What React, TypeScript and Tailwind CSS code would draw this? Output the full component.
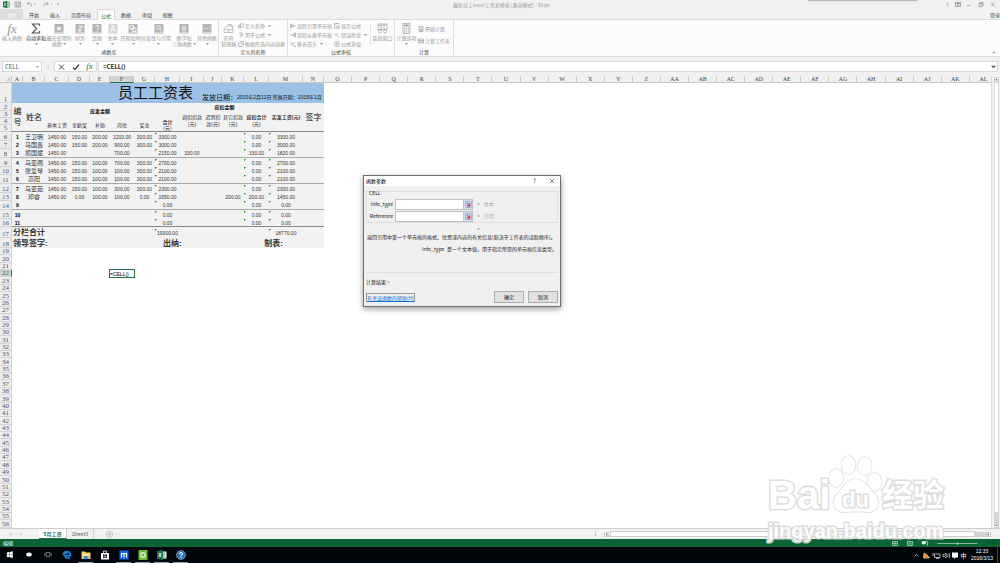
import type { ReactNode } from "react";

/* ---------- data ---------- */

type PayRow = { n: number; name: string; c: string[]; h: string; i?: string; k?: string; l: string; m: string };

const pay: PayRow[] = [
  { n: 1, name: "王卫明", c: ["1450.00", "150.00", "200.00", "1200.00", "300.00"], h: "3300.00", l: "0.00", m: "3300.00" },
  { n: 2, name: "马国鑫", c: ["1450.00", "150.00", "200.00", "900.00", "300.00"], h: "3000.00", l: "0.00", m: "3000.00" },
  { n: 3, name: "熊国斌", c: ["1450.00", "", "", "700.00", ""], h: "2150.00", i: "330.00", l: "330.00", m: "1820.00" },
  { n: 4, name: "马亚阁", c: ["1450.00", "150.00", "100.00", "700.00", "300.00"], h: "2700.00", l: "0.00", m: "2700.00" },
  { n: 5, name: "张爱琴", c: ["1450.00", "150.00", "100.00", "100.00", "300.00"], h: "2100.00", l: "0.00", m: "2100.00" },
  { n: 6, name: "高阳", c: ["1450.00", "150.00", "100.00", "100.00", "300.00"], h: "2100.00", l: "0.00", m: "2100.00" },
  { n: 7, name: "马亚茹", c: ["1450.00", "150.00", "100.00", "300.00", "300.00"], h: "2300.00", l: "0.00", m: "2300.00" },
  { n: 8, name: "邓睿", c: ["1450.00", "0.00", "100.00", "100.00", "0.00"], h: "1650.00", k: "200.00", l: "200.00", m: "1450.00" },
  { n: 9, name: "", c: ["", "", "", "", ""], h: "0.00", l: "0.00", m: "0.00" },
  { n: 10, name: "", c: ["", "", "", "", ""], h: "0.00", l: "0.00", m: "0.00" },
  { n: 11, name: "", c: ["", "", "", "", ""], h: "0.00", l: "0.00", m: "0.00" },
];

const columns = [
  ..."ABCDEFGHIJKLMNOPQRSTUVWXYZ".split(""),
  ..."ABCDEFGHIJKL".split("").map((l) => "A" + l),
];
const colWidths = [
  "w-[12px]", "w-[11px]", "w-[22px]", "w-[24px]", "w-[21px]", "w-[20px]", "w-[24px]", "w-[21px]",
  "w-[25px]", "w-[24px]", "w-[18px]", "w-[22px]", "w-[25px]", "w-[34px]", "w-[21px]",
];
const emptyRows = Array.from({ length: 38 }, (_, i) => i + 19);

/* ---------- ribbon ---------- */

function Book({ children }: { children: ReactNode }) {
  return (
    <svg viewBox="0 0 20 22" className="h-[11px] w-[10px]">
      <path d="M1 2h18v19H1z" fill="#b7b2b7" />
      <path d="M3 19h16" stroke="#e6e4e6" strokeWidth="1.4" />
      <g fill="none" stroke="#f7f5f7" strokeWidth="2">{children}</g>
    </svg>
  );
}

const Caret = () => (
  <svg viewBox="0 0 6 4" className="h-[2px] w-[3px]">
    <path d="M0 0h6L3 4z" fill="#9a9a9a" />
  </svg>
);

function Big({ w, lines, icon, dark, caret = true }: { w: string; lines: string[]; icon: ReactNode; dark?: boolean; caret?: boolean }) {
  return (
    <button className={`${w} flex shrink-0 flex-col items-center pt-[2px] text-[5px] leading-[6px] whitespace-nowrap ${dark ? "text-[#333]" : "text-[#999]"}`}>
      <span className="flex h-[13px] items-center">{icon}</span>
      {lines.map((l, i) => (
        <span key={l} className="flex items-center gap-[1px]">
          {l}
          {caret && i === 1 && <Caret />}
        </span>
      ))}
      {caret && lines.length === 1 && <span className="flex h-[5px] items-center"><Caret /></span>}
    </button>
  );
}

function Small({ icon, children, caret }: { icon: ReactNode; children: ReactNode; caret?: boolean }) {
  return (
    <button className="flex h-[9px] items-center gap-[1px] text-[5px] leading-[7px] whitespace-nowrap text-[#999]">
      <svg viewBox="0 0 12 12" className="h-[6px] w-[6px]" fill="none" stroke="#aaa5aa" strokeWidth="1.5">{icon}</svg>
      {children}
      {caret && <span className="pl-[2px]"><Caret /></span>}
    </button>
  );
}

function Group({ title, w, children }: { title: string; w: string; children: ReactNode }) {
  return (
    <section className={`${w} flex shrink-0 flex-col border-r border-[#dedede]`}>
      <div className="flex h-[28px]">{children}</div>
      <h2 className="text-center text-[5px] leading-[8px] text-[#444]">{title}</h2>
    </section>
  );
}

function Ribbon() {
  return (
    <div className="flex h-[38px] shrink-0 border-y border-[#dcdcdc] bg-[#fcfcfc]">
      <Group title="函数库" w="w-[219px]">
        <Big w="w-[24px]" lines={["插入函数"]} caret={false} icon={<i className="font-['Liberation_Serif',serif] text-[13px] leading-none text-[#999]">fx</i>} />
        <Big w="w-[24px]" dark lines={["自动求和"]} icon={
          <svg viewBox="0 0 20 22" className="h-[11px] w-[10px]"><path d="M17 6V2H3l8 9-8 9h14v-4" fill="none" stroke="#555" strokeWidth="2.4" /></svg>
        } />
        <Big w="w-[22px]" lines={["最近使用的", "函数"]} icon={<Book><path d="M10 5l1.500 4h4.500l-3.500 3 1.500 4-4-2.500L6 16l1.500-4L4 9h4.500z" fill="#f7f5f7" stroke="none" /></Book>} />
        <Big w="w-[20px]" lines={["财务"]} icon={<Book><path d="M6 13h7M6 16h7M8 9h8M8 6h8" /></Book>} />
        <Big w="w-[14px]" lines={["逻辑"]} icon={<Book><path d="M7 8q0-3 3.500-3T14 8q0 2-3.500 4v2M10.500 15.500v2" /></Book>} />
        <Big w="w-[17px]" lines={["文本"]} icon={
          <svg viewBox="0 0 20 22" className="h-[11px] w-[10px]"><path d="M1 2h18v19H1z" fill="#d9d2d9" /><path d="M5 17l5-12 5 12M7 13h6" fill="none" stroke="#fff" strokeWidth="2" /></svg>
        } />
        <Big w="w-[24px]" lines={["日期和时间"]} icon={<Book><path d="M4 5h7v7H4zM9 10h7v7H9z" /></Book>} />
        <Big w="w-[27px]" lines={["查找与引用"]} icon={<Book><circle cx="9" cy="9" r="3.500" /><path d="M12 12l4 5" /></Book>} />
        <Big w="w-[24px]" lines={["数学和", "三角函数"]} icon={<Book><ellipse cx="10" cy="11" rx="3.500" ry="5.500" /><path d="M7 11h6" /></Book>} />
        <Big w="w-[22px]" lines={["其他函数"]} icon={<Book><path d="M4 11h2.500M9 11h2.500M14 11h2.500" /></Book>} />
      </Group>
      <Group title="定义的名称" w="w-[69px]">
        <Big w="w-[19px]" lines={["名称", "管理器"]} caret={false} icon={
          <svg viewBox="0 0 22 20" className="h-[10px] w-[11px]" fill="none" stroke="#b5b0b5" strokeWidth="1.6"><path d="M2 11L7 4h11l2 7v6H2zM2 11h18M8 14h6M9 1h8l3 5" /></svg>
        } />
        <div className="flex flex-col pt-px">
          <Small caret icon={<path d="M4 2h8v6H4zM1 5h4v5H1z" />}>定义名称</Small>
          <Small caret icon={<path d="M2 2h6v4M4 10l3-6 3 6" />}>用于公式</Small>
          <Small icon={<path d="M1 4h7v7H1zM4 1h7v7" />}>根据所选内容创建</Small>
        </div>
      </Group>
      <Group title="公式审核" w="w-[107px]">
        <div className="flex w-[46px] flex-col pt-px pl-[2px]">
          <Small icon={<path d="M1 1v10M3 3l6 3-6 3zM9 6h3" />}>追踪引用单元格</Small>
          <Small icon={<path d="M11 1v10M1 6h3M9 3L4 6l5 3z" />}>追踪从属单元格</Small>
          <Small caret icon={<path d="M1 2l8 9M9 2L1 10M8 11h4" />}>移去箭头</Small>
        </div>
        <div className="flex w-[36px] flex-col pt-px">
          <Small icon={<path d="M1 1h9v9H1zM3 3l7 8" />}>显示公式</Small>
          <Small caret icon={<path d="M1 3l3 4 4-5M7 7l4 4" />}>错误检查</Small>
          <Small icon={<><circle cx="6" cy="6" r="5" /><path d="M4 9l2-6 2 6" /></>}>公式求值</Small>
        </div>
        <div className="mt-[4px] h-[21px] border-l border-[#e4e4e4]" />
        <Big w="w-[23px]" lines={["监视窗口"]} caret={false} icon={
          <svg viewBox="0 0 22 22" className="h-[11px] w-[11px]" fill="none" stroke="#aaa4aa" strokeWidth="1.6"><path d="M2 2h18v11H2z" /><path d="M2 4h18M8 4v9M14 4v9" /><circle cx="6" cy="17" r="3" fill="#fff" /><circle cx="16" cy="17" r="3" fill="#fff" /></svg>
        } />
      </Group>
      <Group title="计算" w="w-[59px]">
        <Big w="w-[23px]" lines={["计算选项"]} icon={
          <svg viewBox="0 0 18 22" className="h-[11px] w-[9px]" fill="none" stroke="#b0abb0" strokeWidth="1.6"><path d="M2 1h14v20H2z" /><path d="M4 5h10" strokeWidth="4" /><path d="M5 10v9M9 10v9M13 10v9" strokeWidth="2.500" strokeDasharray="2 1.500" /></svg>
        } />
        <div className="flex flex-col gap-[3px] pt-[4px]">
          <Small icon={<path d="M2 1h8v10H2zM3 4h6M4 7h5M4 9h5" />}>开始计算</Small>
          <Small icon={<path d="M1 2h10v8H1zM1 5h10M4 2v8M8 6v4" />}>计算工作表</Small>
        </div>
      </Group>
      <div className="flex flex-1 items-end justify-end pr-[4px] pb-[2px]">
        <svg viewBox="0 0 8 5" className="h-[3px] w-[4px]" fill="none" stroke="#555" strokeWidth="1.5"><path d="M1 4l3-3 3 3" /></svg>
      </div>
    </div>
  );
}

function ExcelMark({ className }: { className: string }) {
  return (
    <svg viewBox="0 0 20 20" className={className}>
      <path d="M9 3h10v14H9z" fill="#fff" stroke="#217346" strokeWidth="1.5" />
      <path d="M12 6h5M12 10h5M12 14h5" stroke="#217346" strokeWidth="1.6" />
      <path d="M0 2l12-2v20L0 18z" fill="#1e7145" />
      <path d="M3.500 6l5 8M8.500 6l-5 8" stroke="#fff" strokeWidth="1.8" />
    </svg>
  );
}

function TitleBar() {
  return (
    <header className="relative flex h-[9px] shrink-0 items-center justify-between">
      <div className="absolute top-0 right-[82px] h-px w-[110px] rounded-b bg-[#b8b8b8] shadow" />
      <div className="flex items-center pl-[3px] text-[#999]">
        <ExcelMark className="h-[7px] w-[7px]" />
        <svg viewBox="0 0 90 14" className="ml-[4px] h-[7px] w-[45px]" fill="none" stroke="#a0a0a0" strokeWidth="1.6">
          <path d="M2 2h11v10H2zM4 2v4h7V2M5 12V9h5v3" />
          <path d="M30 2l-4 3 4 3M26 5h6q4 1 3 6" />
          <path d="M65 2l4 3-4 3M69 5h-6q-4 1-3 6" />
          <path d="M40 6h3M74 6h3M86 4h4M86 7h4" strokeWidth="1.500" />
        </svg>
      </div>
      <h1 className="text-[5px] leading-[9px] text-[#a0a0a0]">最新员工excel工资表模板 (兼容模式) - Excel</h1>
      <div className="flex w-[56px] items-center gap-[7px] pl-[2px] text-[5px] text-[#888]">
        <span>?</span>
        <svg viewBox="0 0 84 10" className="h-[5px] w-[42px]" fill="none" stroke="#8a8a8a" strokeWidth="1.4">
          <path d="M1 1h10v8H1zM1 3h10M6 4v5M4 6h4M24 7h7M48 3h6v6h-6zM50 3V1h6v6h-2M72 1l7 8M79 1l-7 8" />
        </svg>
      </div>
    </header>
  );
}

const tabs: [string, string][] = [
  ["文件", "w-[23px] bg-[#dcdcdc] text-white"],
  ["开始", "w-[22px] text-[#444]"],
  ["插入", "w-[20px] text-[#444]"],
  ["页面布局", "w-[32px] text-[#444]"],
  ["公式", "w-[18px] border border-b-0 border-[#d8d8d8] bg-[#fcfcfc] text-[#217346]"],
  ["数据", "w-[22px] text-[#444]"],
  ["审阅", "w-[20px] text-[#444]"],
  ["视图", "w-[21px] text-[#444]"],
];

function FormulaBar() {
  return (
    <div className="flex h-[19px] shrink-0 items-center px-[2px]">
      <div className="flex h-[11px] w-[40px] items-center border border-[#d9d9d9] bg-white">
        <input aria-label="名称框" defaultValue="CELL" className="h-[9px] w-[33px] bg-transparent pl-[2px] text-[6px] text-[#555] outline-none" />
        <Caret />
      </div>
      <span className="w-[12px] text-center text-[6px] leading-[8px] text-[#888]">⁝</span>
      <div className="flex h-[11px] w-[43px] items-center justify-around border border-[#d9d9d9] bg-white">
        <button aria-label="取消输入"><svg viewBox="0 0 12 12" className="h-[6px] w-[7px]" fill="none" stroke="#444" strokeWidth="2"><path d="M1 1l10 10M11 1L1 11" /></svg></button>
        <button aria-label="输入"><svg viewBox="0 0 14 12" className="h-[6px] w-[8px]" fill="none" stroke="#444" strokeWidth="2.600"><path d="M1 7l4 4 8-10" /></svg></button>
        <button aria-label="插入函数" className="font-['Liberation_Serif',serif] text-[9px] leading-[9px] text-[#217346] italic">fx</button>
      </div>
      <div className="ml-[1px] flex h-[11px] flex-1 items-center border border-[#d9d9d9] bg-white pr-[1px]">
        <input aria-label="编辑栏" defaultValue="=CELL()" className="h-[9px] flex-1 bg-transparent pl-[4px] text-[6px] font-bold text-[#222] outline-none" />
        <svg viewBox="0 0 8 5" className="h-[3px] w-[5px]" fill="none" stroke="#444" strokeWidth="1.800"><path d="M1 1l3 3 3-3" /></svg>
      </div>
    </div>
  );
}

/* ---------- worksheet ---------- */

function RowHead({ n }: { n: number }) {
  const active = n === 22;
  return (
    <th scope="row" className={`border-r border-b border-[#d2d2d2] p-0 text-center align-bottom font-['Liberation_Serif',serif] text-[7px] leading-[6px] font-normal ${active ? "border-r-[#217346] bg-[#d2d2d2] text-[#217346]" : "bg-[#ededed] text-[#555]"}`}>
      {n}
    </th>
  );
}

function Flag({ children }: { children: ReactNode }) {
  return (
    <div className="relative">
      <svg viewBox="0 0 4 4" className="absolute -top-[1px] left-0 h-[2px] w-[2px]"><path d="M0 0h4L0 4z" fill="#168a2c" /></svg>
      {children}
    </div>
  );
}

function Sheet() {
  return (
    <table className="h-full w-[calc(100%+7px)] table-fixed border-separate border-spacing-0 text-center font-['Liberation_Sans','Noto_Sans_CJK_SC',sans-serif] text-[5px] leading-[6px] text-[#333]">
      <colgroup>
        {colWidths.map((w, i) => <col key={i} className={w} />)}
        {columns.slice(14).map((c) => <col key={c} />)}
      </colgroup>
      <thead>
        <tr className="h-[7px] font-['Liberation_Serif',serif] text-[6px] leading-[6px]">
          <td className="border-r border-b border-[#c8c8c8] bg-[#f0f0f0] p-0">
            <svg viewBox="0 0 10 6" className="ml-auto h-[4px] w-[6px]"><path d="M8 0v6H2z" fill="#c0c0c0" /></svg>
          </td>
          {columns.map((c) => (
            <th key={c} scope="col" className={`border-r border-b p-0 font-normal ${c === "F" ? "border-r-[#c8c8c8] border-b-[#217346] bg-[#d2d2d2] text-[#217346]" : "border-[#c8c8c8] bg-[#f0f0f0] text-[#444]"}`}>{c}</th>
          ))}
        </tr>
      </thead>
      <tbody className="[&_td]:p-0 [&_td]:whitespace-nowrap">
        <tr className="h-[20px]">
          <RowHead n={1} />
          <td colSpan={14} className="bg-[#9bc2e6] text-[#111]">
            <div className="flex items-end pl-[106px]">
              <span className="text-[15px] leading-[18px]">员工工资表</span>
              <span className="pl-[9px] text-[7px] leading-[9px]">发放日期：</span>
              <span className="text-[5px] leading-[9px]">2015年2月12日 所属日期：2015年1月</span>
            </div>
          </td>
          <td colSpan={24} />
        </tr>
        <tr className="h-[8px] [&>td:not(:last-child)]:bg-[#f2f2f2]">
          <RowHead n={2} />
          <td rowSpan={4} className="border-b border-[#888] text-[8px] leading-[11px] whitespace-normal! text-[#111]">编<br />号</td>
          <td rowSpan={4} className="border-b border-[#888] text-[8px] leading-[9px] text-[#111]">姓名</td>
          <td rowSpan={2} colSpan={5} className="font-bold text-[#111]">应发金额</td>
          <td rowSpan={2} />
          <td colSpan={4} className="font-bold text-[#111]">应扣金额</td>
          <td />
          <td rowSpan={4} className="border-b border-[#888] text-[8px] leading-[9px] text-[#111]">签字</td>
          <td colSpan={24} />
        </tr>
        <tr className="h-[7px] [&>td:not(:last-child)]:bg-[#f2f2f2]">
          <RowHead n={3} />
          <td rowSpan={3} className="border-b border-[#888] leading-[7px]">调扣扣款<br />(元)</td>
          <td rowSpan={3} className="border-b border-[#888] leading-[7px]">迟到扣<br />款(元)</td>
          <td rowSpan={3} className="border-b border-[#888] leading-[7px]">其它扣款<br />(元)</td>
          <td rowSpan={3} className="border-b border-[#888] leading-[7px]"><b>应扣合计</b><br />(元)</td>
          <td rowSpan={3} className="border-b border-[#888] pb-[7px]! leading-[7px] font-bold">实发工资(元)</td>
          <td colSpan={24} />
        </tr>
        <tr className="h-[7px] [&>td:not(:last-child)]:bg-[#f2f2f2]">
          <RowHead n={4} />
          {["基本工资", "全勤奖", "补助", "岗位", "奖金"].map((t) => (
            <td key={t} rowSpan={2} className="border-b border-[#888]">{t}</td>
          ))}
          <td rowSpan={2} className="border-b border-[#888] leading-[6px]"><b>合计</b><br />（元）</td>
          <td colSpan={24} />
        </tr>
        <tr className="h-[7px]">
          <RowHead n={5} />
          <td colSpan={24} />
        </tr>
        {pay.map((r) => (
          <tr
            key={r.n}
            className={`${r.n % 3 === 2 ? "h-[8px]" : "h-[9px]"} [&>td:not(:last-child)]:bg-[#f2f2f2] ${r.n === 11 ? "[&>td:not(:last-child)]:border-b [&>td:not(:last-child)]:border-[#888]" : r.n % 3 === 0 ? "[&>td:not(:last-child)]:border-b [&>td:not(:last-child)]:border-[#aaa]" : ""}`}
          >
            <RowHead n={r.n + 5} />
            <td className="font-bold text-black">{r.n}</td>
            <td className="text-[6px]">{r.name}</td>
            {r.c.map((v, i) => <td key={i}>{v}</td>)}
            <td><Flag>{r.h}</Flag></td>
            <td>{r.i}</td>
            <td />
            <td>{r.k}</td>
            <td><Flag>{r.l}</Flag></td>
            <td><Flag>{r.m}</Flag></td>
            <td />
            <td colSpan={24} />
          </tr>
        ))}
        <tr className="h-[11px] [&>td:not(:last-child)]:bg-[#f2f2f2]">
          <RowHead n={17} />
          <td colSpan={7} className="pl-px! text-left text-[8px] leading-[9px] font-medium text-[#111]">分栏合计</td>
          <td><Flag>19300.00</Flag></td>
          <td colSpan={4} />
          <td><Flag>18770.00</Flag></td>
          <td />
          <td colSpan={24} />
        </tr>
        <tr className="h-[10px] text-[8px] leading-[9px] font-bold text-[#333] [&>td:not(:last-child)]:bg-[#f2f2f2]">
          <RowHead n={18} />
          <td colSpan={7} className="pl-px! text-left">领导签字:</td>
          <td colSpan={4} className="pl-[8px]! text-left">出纳:</td>
          <td colSpan={2}>制表:</td>
          <td />
          <td colSpan={24} />
        </tr>
        {emptyRows.map((n) =>
          n === 22 ? (
            <tr key={n}>
              <RowHead n={n} />
              <td colSpan={5} />
              <td className="text-left text-black outline outline-[#217346]">=CELL()</td>
              <td colSpan={32} />
            </tr>
          ) : (
            <tr key={n}>
              <RowHead n={n} />
              <td colSpan={38} />
            </tr>
          ),
        )}
      </tbody>
    </table>
  );
}

function Arrow({ d }: { d: string }) {
  return (
    <span className="flex h-[5px] w-[5px] shrink-0 items-center justify-center border border-[#d0d0d0] bg-white">
      <svg viewBox="0 0 4 4" className="h-[3px] w-[3px]"><path d={d} fill="#555" /></svg>
    </span>
  );
}

/* ---------- dialog ---------- */

function ArgRow({ id, label, hint }: { id: string; label: string; hint: string }) {
  return (
    <div className="flex h-[12px] items-center">
      <label htmlFor={id} className="w-[25px] text-right">{label}</label>
      <div className="ml-[2px] flex h-[11px] w-[78px] border border-[#c0c0c0] bg-white">
        <input id={id} className="min-w-0 flex-1 px-[1px] text-[5px] outline-none" />
        <button type="button" aria-label={`选择 ${label}`} className="flex w-[9px] items-center justify-center border-l border-[#c0c0c0] bg-[#d8def0]">
          <svg viewBox="0 0 12 12" className="h-[7px] w-[7px]"><path d="M1 1h10v10H1zM1 4h10M4 1v10M7 1v10M1 7h10" fill="#fff" stroke="#6d86c6" /><path d="M4 4l4 4M8.500 5v4h-4z" fill="#d23" stroke="#d23" /></svg>
        </button>
      </div>
      <span className="pl-[4px]">=</span>
      <span className="pl-[4px] text-[#a8a8a8]">{hint}</span>
    </div>
  );
}

function ArgsDialog() {
  return (
    <form role="dialog" aria-label="函数参数" className="absolute top-[175px] left-[363px] flex w-[198px] flex-col border border-[#6e6e6e] bg-[#f0f0f0] text-[5px] leading-[8px] text-[#222] shadow-[0_2px_6px_rgba(0,0,0,0.4)]">
      <div className="flex h-[10px] items-center bg-white pl-[2px]">
        <h2 className="flex-1 text-black">函数参数</h2>
        <button type="button" aria-label="帮助" className="w-[17px] text-[6px]">?</button>
        <button type="button" aria-label="关闭" className="flex w-[17px] justify-center">
          <svg viewBox="0 0 8 8" className="h-[4px] w-[4px]" stroke="#333" strokeWidth="1.200"><path d="M0 0l8 8M8 0L0 8" /></svg>
        </button>
      </div>
      <fieldset className="mx-[2px] mt-[5px] h-[32px] border border-[#dedede] pl-px">
        <div className="h-[6px] pl-px leading-[2px]">CELL</div>
        <ArgRow id="info-type" label="Info_type" hint="文本" />
        <ArgRow id="reference" label="Reference" hint="引用" />
      </fieldset>
      <p className="pt-[2px] pl-[113px]">=</p>
      <p className="pl-[3px] whitespace-nowrap">返回引用中第一个单元格的格式、位置或内容的有关信息(取决于工作表的读取顺序)。</p>
      <p className="flex gap-[3px] pt-[4px] pl-[58px] whitespace-nowrap">
        <span className="w-[22px]">Info_type</span>
        <span>是一个文本值，用于指定所需的单元格信息类型。</span>
      </p>
      <div className="mx-[2px] mt-[19px] border-t border-[#dedede] pt-[5px]">计算结果 =</div>
      <div className="flex items-center gap-[4px] pt-[5px] pr-[2px] pb-[3px] pl-[2px]">
        <a href="#help" className="border border-[#999] leading-[7px] text-[#0a6fd0] underline">有关该函数的帮助(H)</a>
        <button type="submit" className="ml-auto h-[12px] w-[30px] border border-[#adadad] bg-[#e1e1e1]">确定</button>
        <button type="button" className="h-[12px] w-[30px] border border-[#adadad] bg-[#e1e1e1]">取消</button>
      </div>
    </form>
  );
}

/* ---------- watermark ---------- */

function Watermark() {
  return (
    <div className="pointer-events-none absolute right-[54px] bottom-[18px] flex w-[178px] flex-col font-['Liberation_Sans','Noto_Sans_CJK_SC',sans-serif] font-bold text-white opacity-90 [-webkit-text-stroke:3px_#dadada] [paint-order:stroke_fill]">
      <div className="flex h-[58px] items-end">
        <span className="w-[61px] text-[40px] leading-[36px]">Bai</span>
        <span className="relative h-[58px] w-[53px]">
          <svg viewBox="0 0 53 58" className="h-[58px] w-[53px]" fill="#fff" stroke="#dadada" strokeWidth="1.500">
            <ellipse cx="7" cy="23" rx="7" ry="9" />
            <ellipse cx="19.500" cy="10" rx="7" ry="9" />
            <ellipse cx="35.500" cy="11" rx="7" ry="9" transform="rotate(10 35.500 11)" />
            <ellipse cx="45.500" cy="27" rx="7" ry="9" />
            <path d="M26 24c-9 0-11 9-17 14-7 6-6 19 6 19 6 0 16-1 23 0 12 1 14-11 8-18-6-5-10-15-20-15z" />
          </svg>
          <span className="absolute right-0 bottom-[2px] left-0 text-center text-[22px] leading-[22px]">du</span>
        </span>
        <span className="text-[31px] leading-[34px]">经验</span>
      </div>
      <span className="pt-[4px] text-[20px] leading-[28px]">jingyan.baidu.com</span>
    </div>
  );
}

/* ---------- taskbar ---------- */

const apps: { name: string; open?: boolean; icon: ReactNode }[] = [
  { name: "开始", icon: <path d="M1 4l7-1v7H1zM9 3l9-2v9H9zM1 11h7v7l-7-1zM9 11h9v9l-9-2z" fill="#fff" /> },
  { name: "搜索", icon: <ellipse cx="10" cy="10" rx="8" ry="6" fill="#fff" /> },
  { name: "任务视图", icon: <path d="M5 4h10v12H5zM1 6v8M19 6v8" fill="none" stroke="#ccc" strokeWidth="1.600" /> },
  { name: "Edge", icon: <path d="M3 9c1-8 14-8 14 2H6c1 6 7 6 10 4M2 10c2-4 6-5 9-4" fill="none" stroke="#1580e0" strokeWidth="3.500" /> },
  { name: "文件资源管理器", open: true, icon: <><path d="M1 3h7l2 2h9v13H1z" fill="#f5cf62" /><path d="M3 8h14v3H3z" fill="#fff2c0" /><path d="M5 12h10v6H5z" fill="#3f9be0" /></> },
  { name: "应用商店", icon: <><path d="M2 6h16v13H2z" fill="#fff" /><path d="M7 6V2h6v4" fill="none" stroke="#fff" strokeWidth="1.600" /><path d="M6 9h3.500v3H6zM10.500 9H14v3h-3.500zM6 13h3.500v3H6zM10.500 13H14v3h-3.500z" fill="#111" /></> },
  { name: "傲游", open: true, icon: <><path d="M1 1h18v18H1z" fill="#1769f0" /><path d="M5 15V7h10v8M10 7v8" fill="none" stroke="#fff" strokeWidth="2.200" /></> },
  { name: "浏览器", open: true, icon: <><path d="M1 0h18v20H1z" fill="#6cbb2c" /><circle cx="10" cy="10" r="6" fill="#f4ffe8" /><path d="M10 4v12M4 10h12M6 6l8 8M14 6l-8 8" stroke="#6cbb2c" strokeWidth="1.200" /><circle cx="10" cy="10" r="1.500" fill="#4a8a1c" /></> },
  { name: "Excel", open: true, icon: <><path d="M9 3h10v14H9z" fill="#fff" /><path d="M12 6h5M12 10h5M12 14h5" stroke="#217346" strokeWidth="1.600" /><path d="M0 2l12-2v20L0 18z" fill="#1e7145" /><path d="M3.500 6l5 8M8.500 6l-5 8" stroke="#fff" strokeWidth="1.800" /></> },
  { name: "帮助", open: true, icon: <><circle cx="10" cy="10" r="9" fill="#2f6fb5" stroke="#b9cfe8" /><path d="M7 8q0-3 3-3t3 3q0 2-3 3v2M10 14v2" fill="none" stroke="#fff" strokeWidth="2" /></> },
];

function Taskbar() {
  return (
    <footer className="flex h-[16px] shrink-0 items-stretch bg-[#02050a] text-white">
      {apps.map((a) => (
        <button key={a.name} aria-label={a.name} className={`mx-[2px] flex w-[15px] items-center justify-center border-b ${a.open ? "border-[#8aa4b8]" : "border-transparent"}`}>
          <svg viewBox="0 0 20 20" className={a.open || a.name === "Edge" || a.name === "应用商店" ? "h-[10px] w-[10px]" : "h-[7px] w-[8px]"}>{a.icon}</svg>
        </button>
      ))}
      <div className="ml-auto flex items-center">
        <svg viewBox="0 0 90 14" className="h-[7px] w-[45px]" fill="none" stroke="#e0e0e0" strokeWidth="1.500">
          <path d="M3 9l4-4 4 4" />
          <path d="M22 2l6 4 5 6H21z" fill="#f08a2c" stroke="#f5d070" />
          <path d="M43 4h11v7H43zM40 2v6M46 13h6" />
          <path d="M60 5h3l3-3v10l-3-3h-3zM69 4q2 3 0 6M72 2q3 5 0 10" />
          <path d="M78 1h12v10h-5l-3 3v-3h-4z" fill="#fff" stroke="none" />
        </svg>
        <span className="w-[11px] text-center text-[6px]">中</span>
        <time className="w-[26px] text-center font-['Liberation_Sans',sans-serif] text-[5px] leading-[7px]">12:33<br />2016/3/13</time>
        <span className="ml-[2px] h-full w-[3px] border-l border-[#444]" />
      </div>
    </footer>
  );
}

export default function App() {
  return (
    <div className="relative flex h-screen flex-col overflow-hidden bg-[#f1f1f1] font-['Noto_Sans_CJK_SC','Noto_Sans',sans-serif]">
      <TitleBar />
      <nav className="flex h-[10px] shrink-0 items-stretch text-[5px] leading-[9px]">
        {tabs.map(([t, c]) => (
          <button key={t} className={`${c} ${t === "公式" ? "relative z-10 -mb-px" : ""}`}>{t}</button>
        ))}
        <button className="ml-auto w-[10px] text-left whitespace-nowrap text-[#444]">登录</button>
      </nav>
      <Ribbon />
      <FormulaBar />

      <main className="flex min-h-0 flex-1">
        <div className="min-w-0 flex-1 overflow-hidden bg-white"><Sheet /></div>
        <div className="flex w-[9px] shrink-0 flex-col items-center border-l border-[#d8d8d8] pt-px">
          <Arrow d="M0 3l2-2 2 2z" />
          <div className="w-[5px] flex-1 border border-[#d8d8d8] bg-white" />
          <div className="h-[10px] w-[5px] bg-[#d4d4d4]" />
          <Arrow d="M0 1l2 2 2-2z" />
        </div>
      </main>

      <div className="flex h-[11px] shrink-0 items-center border-t border-[#cfcfcf] pr-[9px] text-[6px] leading-[8px] text-[#555]">
        <span className="flex w-[39px] gap-[8px] pl-[10px] text-[6px] text-[#888]"><span>‹</span><span>›</span></span>
        <button className="h-full w-[28px] border-r border-b border-r-[#cfcfcf] border-b-[#217346] bg-white text-[5px] font-bold text-[#217346]">5月工资</button>
        <button className="h-full w-[27px] border-r border-[#cfcfcf] text-[5px]">Sheet3</button>
        <button aria-label="新工作表" className="ml-[12px]">
          <svg viewBox="0 0 14 14" className="h-[7px] w-[7px]" fill="none" stroke="#aaa" strokeWidth="1.400"><circle cx="7" cy="7" r="6" /><path d="M7 4v6M4 7h6" /></svg>
        </button>
        <div className="ml-auto flex w-[40%] items-center">
          <span className="w-[9px]">⁝</span>
          <Arrow d="M3 0L1 2l2 2z" />
          <div className="ml-px h-[6px] flex-1 border border-[#cfcfcf] bg-white" />
          <div className="h-[5px] w-[11px] bg-[#d4d4d4]" />
          <Arrow d="M1 0l2 2-2 2z" />
        </div>
      </div>

      <div className="flex h-[8px] shrink-0 items-center justify-between bg-[#0a6433] px-[3px] text-[5px] leading-[8px] text-white">
        <span>编辑</span>
        <div className="flex items-center">
          <svg viewBox="0 0 180 14" className="h-[7px] w-[90px]" fill="none" stroke="#b4d6c2" strokeWidth="1.500">
            <path d="M3 3h10v8H3zM3 7h10M8 3v8M33 3h10v8H33zM35 6h6M35 8h6M62 3h11v9" />
            <path d="M62 3h7v5h-7z" fill="#fff" />
            <path d="M93 7h80M133 4v6" />
          </svg>
          <span className="w-[16px] text-right text-[#064a24]">100%</span>
        </div>
      </div>
      <Taskbar />
      <ArgsDialog />
      <Watermark />
    </div>
  );
}
